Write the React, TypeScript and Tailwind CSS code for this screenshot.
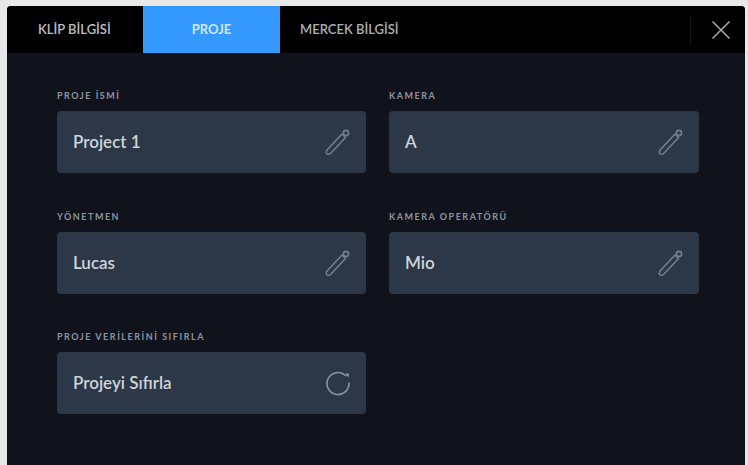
import React from 'react';

const font = { fontFamily: 'Lato, "Open Sans", sans-serif' };

const PencilIcon = () => (
  <svg width="28" height="28" viewBox="0 0 28 28" fill="none" stroke="#747e8c" strokeWidth="1.6" strokeLinejoin="round">
    <path d="M3.5 21.5 L18 6 L21.5 9.5 L7 25 C5.6 26.4 3.6 26.6 2.8 25.8 C2 25 2.3 22.9 3.5 21.5 Z" />
    <circle cx="22" cy="5" r="2.6" />
  </svg>
);

const ResetIcon = () => (
  <svg width="28" height="28" viewBox="0 0 28 28" fill="none" stroke="#8a939f" strokeWidth="1.6" strokeLinecap="round">
    <path d="M21.5 6.5 A11 11 0 1 0 25 14" />
    <path d="M21 4.5 L25 4.5 L24.5 8.5 Z" fill="#8a939f" stroke="none" />
  </svg>
);

const Field = ({ label, value, icon }: { label: string; value: string; icon: React.ReactNode }) => (
  <div className="flex flex-col">
    <div className="h-[22px] pt-[2px] text-[9px] leading-[10px] tracking-[0.17em] font-bold text-[#8d95a0]">{label}</div>
    <div className="h-[62px] rounded-[4px] bg-[#2c3748] flex items-center justify-between pl-[16px] pr-[14px]">
      <span className="text-[17px] font-semibold text-[#d0d4da]">{value}</span>
      {icon}
    </div>
  </div>
);

const App: React.FC = () => {
  return (
    <div className="w-[748px] h-[465px] bg-[#e8e8e8] pl-[7px] pt-[6px] pr-[3px] overflow-hidden" style={font}>
      <div className="h-[459px] rounded-t-[4px] bg-[#10131c] overflow-hidden">
        <div className="h-[47px] bg-black flex items-center text-[13px] font-semibold">
          <div className="w-[136px] pl-[31px] text-[#bcbec2]">KLİP BİLGİSİ</div>
          <div className="w-[137px] h-full bg-[#3399ff] flex items-center justify-center text-[#cfe6fb] font-bold">PROJE</div>
          <div className="pl-[20px] text-[#aeb0b4]">MERCEK BİLGİSİ</div>
          <div className="ml-auto h-[30px] w-[1px] bg-[#191919]" />
          <div className="w-[54px] pl-[5px] flex justify-center">
            <svg width="20" height="20" viewBox="0 0 20 20" stroke="#b0b3b8" strokeWidth="1.4" fill="none">
              <path d="M1.5 1.5 L18.5 18.5 M18.5 1.5 L1.5 18.5" />
            </svg>
          </div>
        </div>
        <div className="grid grid-cols-[309px_310px] gap-x-[23px] gap-y-[36.5px] pl-[50px] pt-[36px]">
          <Field label="PROJE İSMİ" value="Project 1" icon={<PencilIcon />} />
          <Field label="KAMERA" value="A" icon={<PencilIcon />} />
          <Field label="YÖNETMEN" value="Lucas" icon={<PencilIcon />} />
          <Field label="KAMERA OPERATÖRÜ" value="Mio" icon={<PencilIcon />} />
          <Field label="PROJE VERİLERİNİ SIFIRLA" value="Projeyi Sıfırla" icon={<ResetIcon />} />
        </div>
      </div>
    </div>
  );
};

export default App;
